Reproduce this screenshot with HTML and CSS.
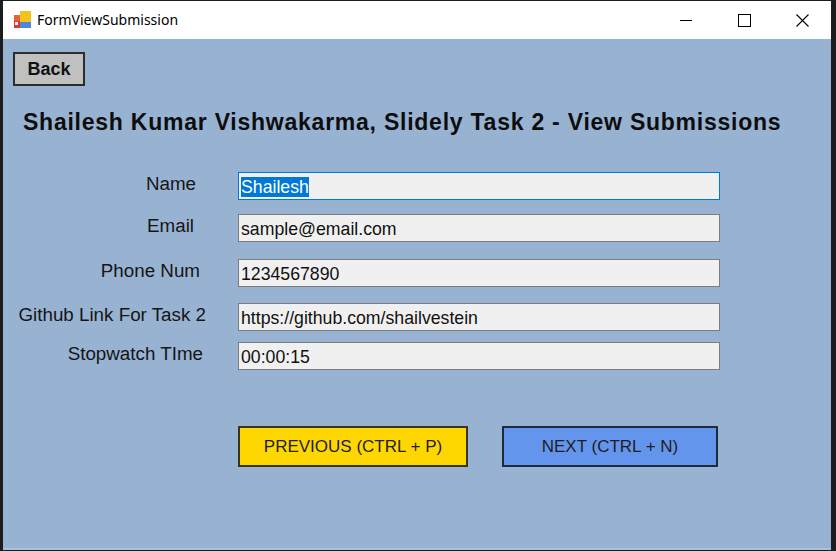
FILE: index.html
```html
<!DOCTYPE html>
<html>
<head>
<meta charset="utf-8">
<title>FormViewSubmission</title>
<link rel="stylesheet" href="styles.css">
</head>
<body>
<div class="window">
  <div class="titlebar">
    <svg class="app-icon" width="19" height="18" viewBox="0 0 19 18">
      <rect x="1" y="4" width="7" height="6" fill="#e0662f"/>
      <rect x="1" y="10" width="7" height="7" fill="#d63a3a"/>
      <rect x="7" y="0" width="11" height="11" fill="#f4c21c"/>
      <rect x="7" y="11" width="11" height="6" fill="#4f86d9"/>
      <rect x="2" y="11" width="3" height="3" fill="#f3f3f3"/>
    </svg>
    <span class="title">FormViewSubmission</span>
    <div class="controls">
      <div class="ctl"><svg width="12" height="12" viewBox="0 0 12 12"><line x1="0" y1="6.5" x2="12" y2="6.5" stroke="#000" stroke-width="1"/></svg></div>
      <div class="ctl"><svg width="13" height="13" viewBox="0 0 13 13"><rect x="0.5" y="0.5" width="12" height="12" fill="none" stroke="#000" stroke-width="1"/></svg></div>
      <div class="ctl"><svg width="13" height="13" viewBox="0 0 13 13"><path d="M0.5 0.5 L12.5 12.5 M12.5 0.5 L0.5 12.5" stroke="#000" stroke-width="1.1" fill="none"/></svg></div>
    </div>
  </div>
  <div class="client">
    <button class="back">Back</button>
    <h1 class="heading">Shailesh Kumar Vishwakarma, Slidely Task 2 - View Submissions</h1>
    <div class="form">
      <div class="row r1">
        <div class="label l1">Name</div>
        <div class="field focused"><span class="sel">Shailesh</span></div>
      </div>
      <div class="row r2">
        <div class="label l2">Email</div>
        <div class="field">sample@email.com</div>
      </div>
      <div class="row r3">
        <div class="label l3">Phone Num</div>
        <div class="field">1234567890</div>
      </div>
      <div class="row r4">
        <div class="label l4">Github Link For Task 2</div>
        <div class="field">https://github.com/shailvestein</div>
      </div>
      <div class="row r5">
        <div class="label l5">Stopwatch TIme</div>
        <div class="field">00:00:15</div>
      </div>
    </div>
    <div class="actions">
      <button class="btn prev">PREVIOUS (CTRL + P)</button>
      <button class="btn next">NEXT (CTRL + N)</button>
    </div>
  </div>
</div>
</body>
</html>
```
FILE: styles.css
```css
html, body {
  margin: 0;
  padding: 0;
}
body {
  background: #1b1c1e;
  width: 836px;
  height: 551px;
  overflow: hidden;
}
.window {
  margin: 1px 0 0 3px;
  width: 828px;
  height: 549px;
  display: flex;
  flex-direction: column;
}
.titlebar {
  height: 38px;
  background: #ffffff;
  display: flex;
  align-items: center;
  font-family: "Noto Sans", "Open Sans", sans-serif;
  font-size: 14px;
  color: #000;
}
.app-icon {
  margin-left: 10px;
  display: block;
}
.title {
  margin-left: 5px;
  margin-top: -1px;
}
.controls {
  margin-left: auto;
  display: flex;
  height: 38px;
}
.ctl {
  width: 58px;
  height: 38px;
  display: flex;
  align-items: center;
  justify-content: center;
}
.ctl svg { display: block; }
.client {
  flex: 1;
  background: #98b3d2;
  padding: 13px 0 0 10px;
  font-family: "Liberation Sans", Arial, sans-serif;
  color: #111;
  border-bottom: 2px solid #a9c1dc;
}
.back {
  display: block;
  width: 72px;
  height: 34px;
  margin: 0;
  padding: 0;
  background: #c0c0c0;
  border: 2px solid #2c2c2c;
  font-family: "Liberation Sans", Arial, sans-serif;
  font-weight: bold;
  font-size: 18px;
  color: #111;
}
.heading {
  margin: 22px 0 0 10px;
  font-size: 23px;
  line-height: 28px;
  font-weight: bold;
  letter-spacing: 0.76px;
  color: #0d0d0d;
}
.form {
  margin-top: 36px;
}
.row {
  display: flex;
  align-items: flex-start;
  gap: 32px;
}
.r2 { margin-top: 14px; }
.r3 { margin-top: 17px; }
.r4 { margin-top: 16px; }
.r5 { margin-top: 11px; }
.label {
  width: 193px;
  box-sizing: border-box;
  text-align: right;
  font-size: 18.8px;
  line-height: 23px;
  white-space: nowrap;
  color: #151515;
}
.l1 { padding-right: 10px; }
.l2 { padding-right: 12px; }
.l3 { padding-right: 6px; }
.l4 { padding-right: 0; }
.l5 { padding-right: 3px; }
.field {
  width: 482px;
  height: 28px;
  box-sizing: border-box;
  background: #f0f0f0;
  border: 1px solid #7c7c7c;
  padding: 2px 0 0 2px;
  font-size: 17.7px;
  line-height: 24px;
  color: #111;
  white-space: nowrap;
}
.field.focused {
  border-color: #0078d7;
}
.sel {
  background: #0078d7;
  color: #fff;
}
.actions {
  margin-top: 56px;
  margin-left: 225px;
  display: flex;
  gap: 34px;
}
.btn {
  height: 41px;
  margin: 0;
  padding: 0;
  border: 2px solid #2a2a2a;
  font-family: "Liberation Sans", Arial, sans-serif;
  font-size: 17px;
  color: #1e1e1e;
}
.prev {
  width: 230px;
  background: #ffd700;
  border-color: #3a3320;
}
.next {
  width: 216px;
  background: #6495ed;
  border-color: #1f2a3d;
}
```
